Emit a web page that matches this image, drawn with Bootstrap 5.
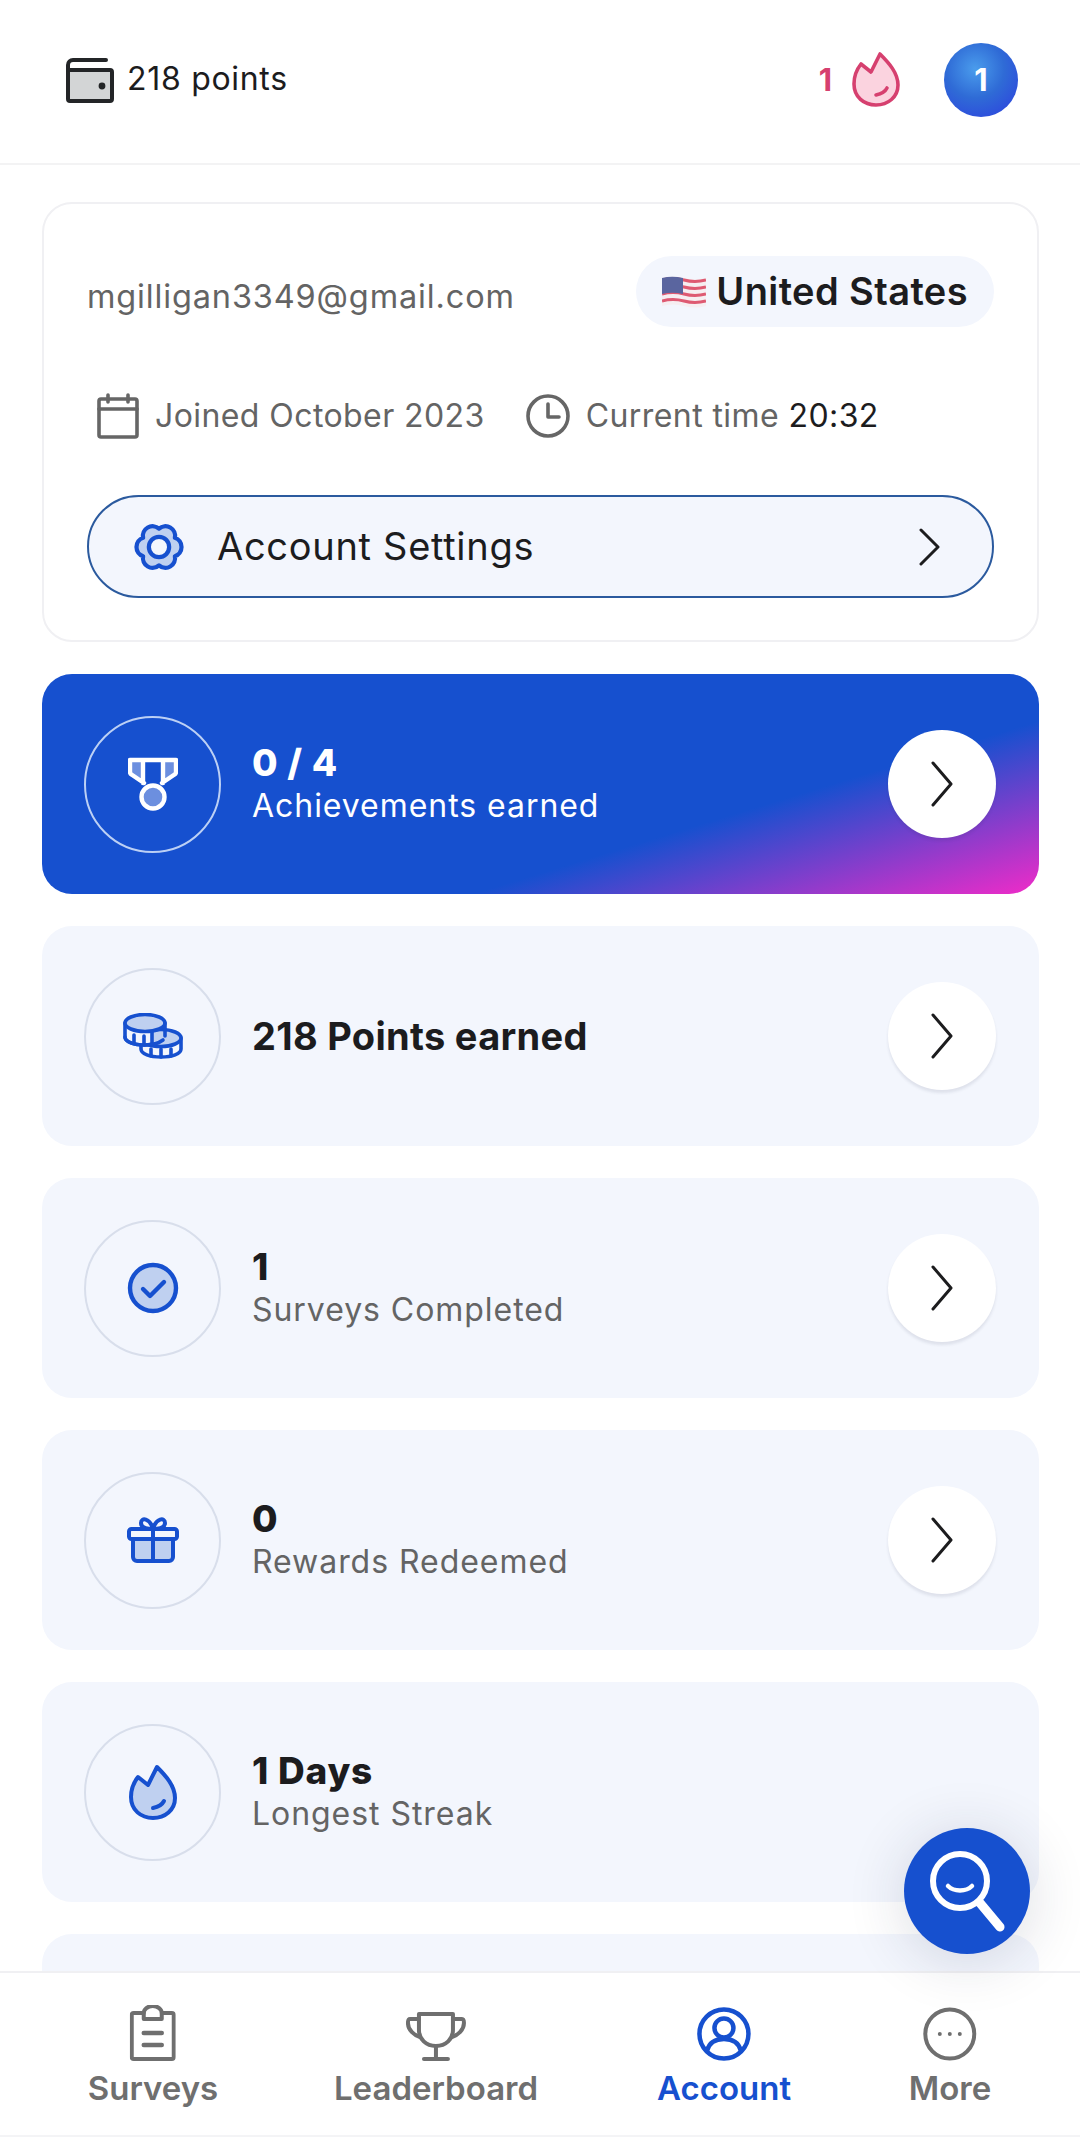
<!DOCTYPE html>
<html lang="en">
<head>
<meta charset="utf-8">
<title>Account</title>
<link rel="stylesheet" href="https://cdn.jsdelivr.net/npm/bootstrap@5.3.0/dist/css/bootstrap.min.css">
<style>
  :root { --brand: #1650cf; --tint: #f3f6fd; --ink: #1c1c1e; --muted: #646464; --icon-fill: #bfd0f0; }
  html, body { margin: 0; height: 2137px; overflow: hidden; background: #fff; }
  body { font-family: "Inter", "Liberation Sans", sans-serif; color: var(--ink); }
  .app-shell { height: 2137px; position: relative; overflow: hidden; }
  .top-strip { height: 165px; padding: 0 62px 3px 64px; border-bottom: 2px solid #f3f3f4; }
  .points-text { font-size: 32px; font-weight: 400; letter-spacing: .7px; margin-left: 13px; margin-top: -2px; }
  .streak-num { font-size: 31px; font-weight: 700; color: #d6406f; margin-right: 20px; }
  .flame-mark { margin-top: -3px; }
  .level-orb { width: 74px; height: 74px; margin-left: 44px; color: #fff; font-size: 31px; font-weight: 700;
    background: radial-gradient(circle at 42% 35%, #4a9cec 0%, #2f6bd6 45%, #2d3ce0 100%); }
  .content-area { flex: 1 1 auto; overflow: hidden; padding: 37px 41px 0 42px; gap: 32px; }
  .profile-box { height: 440px; flex: 0 0 auto; border: 2px solid #f0f0f3; border-radius: 30px; padding: 52px 43px 0 43px; }
  .email-text { font-size: 32.500px; color: var(--muted); letter-spacing: .85px; margin-top: 11px; }
  .country-pill { height: 71px; padding: 0 26px; background: var(--tint); gap: 10px; font-size: 38px; font-weight: 600; letter-spacing: .4px; }
  .meta-line { margin-top: 65px; height: 48px; font-size: 32px; color: var(--muted); letter-spacing: .42px; padding-left: 10px; }
  .meta-line b { font-weight: 400; color: var(--ink); }
  .clock-mark { margin-left: 41px; }
  .settings-btn { height: 103px; margin-top: 55px; padding: 0 52px 0 42px; background: var(--tint); border: 2px solid #2b5a9e; font-size: 38px; font-weight: 400; color: var(--ink); letter-spacing: .7px; }
  .settings-btn span { margin-left: 30px; }
  .stat-tile { height: 220px; flex: 0 0 auto; background: var(--tint); border-radius: 30px; padding: 0 43px 0 42px; }
  .stat-tile.tile-hero { color: #fff; background: linear-gradient(163deg, var(--brand) 67%, #f02bc8 100%); }
  .tile-hero .tile-sub { color: #fff; }
  .tile-hero .icon-ring { border-color: #bcd0f5; }
  .icon-ring { width: 137px; height: 137px; flex: 0 0 auto; border: 2px solid #d8deeb; }
  .tile-copy { margin-left: 31px; }
  .tile-num { font-size: 37px; font-weight: 800; line-height: 43px; letter-spacing: .8px; }
  .tile-sub { font-size: 32px; line-height: 44px; color: var(--muted); letter-spacing: .95px; }
  .tile-solo { font-size: 38px; font-weight: 700; letter-spacing: .3px; }
  .go-circle { width: 108px; height: 108px; flex: 0 0 auto; background: #fff; box-shadow: 0 3px 3px rgba(40, 50, 80, .1); }
  .dock { height: 166px; flex: 0 0 auto; background: #fff; border-top: 2px solid #f0f0f3; border-bottom: 2px solid #f4f4f6; color: #6f6f6f; position: relative; }
  .dock-item { position: absolute; top: 32px; display: flex; flex-direction: column; align-items: center; font-size: 33px; font-weight: 600; transform: translateX(-50%); line-height: 40px; }
  .dock-icon { height: 56px; display: flex; align-items: flex-end; margin-bottom: 7px; }
  .dock-item.is-active { color: var(--brand); }
  .dock-surveys { left: 153px; }
  .dock-board { left: 436px; }
  .dock-account { left: 724px; }
  .dock-more { left: 950px; }
  .search-fab { position: absolute; left: 904px; top: 1828px; width: 126px; height: 126px; background: var(--brand); z-index: 5; box-shadow: 0 6px 60px rgba(30, 40, 70, .16); }
</style>
</head>
<body>
<div class="app-shell d-flex flex-column">

  <header class="top-strip d-flex align-items-center flex-shrink-0">
    <svg width="50" height="46" viewBox="0 0 50 46" fill="none" stroke="#232527" stroke-width="4" stroke-linejoin="round" stroke-linecap="round">
      <path d="M4 13h42a2 2 0 0 1 2 2v27a2 2 0 0 1-2 2H6a2 2 0 0 1-2-2z" fill="#d3d5d6"/>
      <path d="M4 13V8a5 5 0 0 1 5-5h33"/>
      <circle cx="38" cy="29" r="1.400" fill="#232527"/>
    </svg>
    <span class="points-text">218 points</span>
    <span class="streak-num ms-auto">1</span>
    <svg class="flame-mark" width="48" height="56" viewBox="0 0 48 56" fill="#fbd3df" stroke="#d6406f" stroke-width="3.600" stroke-linejoin="round" stroke-linecap="round">
      <path d="M28 3c9 9 18 19 18 31 0 12-10 20-22 20S2 46 2 33c0-8 3-15 7-20l10 8z"/>
      <path d="M24 44c5-1 9-3 11-7" fill="none"/>
    </svg>
    <div class="level-orb rounded-circle d-flex align-items-center justify-content-center">1</div>
  </header>

  <main class="content-area d-flex flex-column">
    <section class="profile-box bg-white">
      <div class="d-flex justify-content-between align-items-center">
        <span class="email-text">mgilligan3349@gmail.com</span>
        <span class="country-pill rounded-pill d-inline-flex align-items-center">
          <svg width="44" height="34" viewBox="0 0 44 34">
            <path d="M0 3Q11 0 22 3T44 3V31Q33 34 22 31T0 31z" fill="#f6eef1"/>
            <g fill="none" stroke="#de5a72" stroke-width="3">
              <path d="M0 5Q11 2 22 5T44 5"/>
              <path d="M0 12Q11 9 22 12T44 12"/>
              <path d="M0 19Q11 16 22 19T44 19"/>
              <path d="M0 26Q11 23 22 26T44 26"/>
            </g>
            <path d="M0 3Q10 .5 21 3V19Q10 16.500 0 19z" fill="#5a659f"/>
          </svg>
          United States
        </span>
      </div>

      <div class="meta-line d-flex align-items-center">
        <svg width="42" height="46" viewBox="0 0 42 46" fill="none" stroke="#666" stroke-width="3.600" stroke-linejoin="round" stroke-linecap="round">
          <rect x="2" y="6" width="38" height="38" rx="2"/>
          <path d="M2 16h38M11 2v7M31 2v7"/>
        </svg>
        <span class="ms-3">Joined October 2023</span>
        <svg class="clock-mark" width="44" height="46" viewBox="0 0 44 46" fill="none" stroke="#666" stroke-width="3.600" stroke-linecap="round" stroke-linejoin="round">
          <circle cx="22" cy="23" r="20"/>
          <path d="M22 11v13h11"/>
        </svg>
        <span class="ms-3">Current time <b>20:32</b></span>
      </div>

      <a class="settings-btn rounded-pill d-flex align-items-center text-decoration-none" href="#">
        <svg width="56" height="56" viewBox="-4 -4 58 58" fill="#bfd0f0" stroke="#1650cf" stroke-width="4.400" stroke-linejoin="round">
          <path d="M25 6A10 10 0 0 1 41.450 15.500 10 10 0 0 1 41.450 34.500 10 10 0 0 1 25 44 10 10 0 0 1 8.550 34.500 10 10 0 0 1 8.550 15.500 10 10 0 0 1 25 6z"/>
          <circle cx="25" cy="25" r="10.500" fill="#f3f6fd"/>
        </svg>
        <span>Account Settings</span>
        <svg class="ms-auto" width="22" height="38" viewBox="0 0 22 38" fill="none" stroke="#1c1c1e" stroke-width="3" stroke-linecap="round" stroke-linejoin="round">
          <path d="M3 2l17 17L3 36"/>
        </svg>
      </a>
    </section>

    <article class="stat-tile tile-hero d-flex align-items-center">
      <div class="icon-ring rounded-circle d-flex align-items-center justify-content-center">
        <svg width="50" height="54" viewBox="0 0 50 54" fill="none" stroke="#fff" stroke-width="4.400" stroke-linejoin="round" stroke-linecap="round">
          <path d="M3 17V5h11v17zM36 22V5h11v12z" fill="#6c8fdf" stroke="none"/>
          <path d="M15 3v23M35 3v23M2 3h46v12a3 3 0 0 1-1.500 2.500L34 26M16 26L3.500 17.500A3 3 0 0 1 2 15V3"/>
          <circle cx="25" cy="40" r="11.500" fill="#6c8fdf"/>
        </svg>
      </div>
      <div class="tile-copy">
        <div class="tile-num">0 / 4</div>
        <div class="tile-sub">Achievements earned</div>
      </div>
      <div class="go-circle rounded-circle d-flex align-items-center justify-content-center ms-auto">
        <svg width="24" height="46" viewBox="0 0 24 46" fill="none" stroke="#1c1c1e" stroke-width="3" stroke-linecap="round" stroke-linejoin="round"><path d="M3 2l18 21L3 44"/></svg>
      </div>
    </article>

    <article class="stat-tile d-flex align-items-center">
      <div class="icon-ring rounded-circle d-flex align-items-center justify-content-center">
        <svg width="62" height="46" viewBox="0 0 62 46" fill="none" stroke="#1650cf" stroke-width="3.600" stroke-linejoin="round" stroke-linecap="round">
          <path d="M19 25v11c0 5 9 8 20 8s20-3 20-8V25z" fill="#f3f6fd"/>
          <ellipse cx="39" cy="25" rx="20" ry="8.500" fill="#bfd0f0"/>
          <path d="M29 36v7M39 36v8M49 36v7"/>
          <path d="M3 10v14c0 5 9 8 20 8 3 0 5 0 7-1V10z" fill="#f3f6fd"/>
          <path d="M12 22v8M22 23v9"/>
          <path d="M3 24c0 5 9 8 20 8 8 0 14-2 18-5"/>
          <ellipse cx="23" cy="10" rx="20" ry="8.500" fill="#bfd0f0"/>
          <path d="M43 10v13"/>
        </svg>
      </div>
      <div class="tile-copy tile-solo">218 Points earned</div>
      <div class="go-circle rounded-circle d-flex align-items-center justify-content-center ms-auto">
        <svg width="24" height="46" viewBox="0 0 24 46" fill="none" stroke="#1c1c1e" stroke-width="3" stroke-linecap="round" stroke-linejoin="round"><path d="M3 2l18 21L3 44"/></svg>
      </div>
    </article>

    <article class="stat-tile d-flex align-items-center">
      <div class="icon-ring rounded-circle d-flex align-items-center justify-content-center">
        <svg width="52" height="52" viewBox="0 0 52 52" fill="#bfd0f0" stroke="#1650cf" stroke-width="4.400" stroke-linecap="round" stroke-linejoin="round">
          <circle cx="26" cy="26" r="23"/>
          <path d="M16 27l7 7 14-14" fill="none"/>
        </svg>
      </div>
      <div class="tile-copy">
        <div class="tile-num">1</div>
        <div class="tile-sub">Surveys Completed</div>
      </div>
      <div class="go-circle rounded-circle d-flex align-items-center justify-content-center ms-auto">
        <svg width="24" height="46" viewBox="0 0 24 46" fill="none" stroke="#1c1c1e" stroke-width="3" stroke-linecap="round" stroke-linejoin="round"><path d="M3 2l18 21L3 44"/></svg>
      </div>
    </article>

    <article class="stat-tile d-flex align-items-center">
      <div class="icon-ring rounded-circle d-flex align-items-center justify-content-center">
        <svg width="52" height="46" viewBox="0 0 52 46" fill="none" stroke="#1650cf" stroke-width="4" stroke-linecap="round" stroke-linejoin="round">
          <path d="M6 22h40v18a4 4 0 0 1-4 4H10a4 4 0 0 1-4-4z" fill="#bfd0f0"/>
          <rect x="2" y="12" width="48" height="10" rx="2.500" fill="#f3f6fd"/>
          <path d="M26 12v32M26 12c-6 0-12-1-12-6 0-6 9-5 12 6zM26 12c6 0 12-1 12-6 0-6-9-5-12 6z"/>
        </svg>
      </div>
      <div class="tile-copy">
        <div class="tile-num">0</div>
        <div class="tile-sub">Rewards Redeemed</div>
      </div>
      <div class="go-circle rounded-circle d-flex align-items-center justify-content-center ms-auto">
        <svg width="24" height="46" viewBox="0 0 24 46" fill="none" stroke="#1c1c1e" stroke-width="3" stroke-linecap="round" stroke-linejoin="round"><path d="M3 2l18 21L3 44"/></svg>
      </div>
    </article>

    <article class="stat-tile d-flex align-items-center">
      <div class="icon-ring rounded-circle d-flex align-items-center justify-content-center">
        <svg width="48" height="56" viewBox="0 0 48 56" fill="#bfd0f0" stroke="#1650cf" stroke-width="4" stroke-linejoin="round" stroke-linecap="round">
          <path d="M28 3c9 9 18 19 18 31 0 12-10 20-22 20S2 46 2 33c0-8 3-15 7-20l10 8z"/>
          <path d="M24 44c5-1 9-3 11-7" fill="none"/>
        </svg>
      </div>
      <div class="tile-copy">
        <div class="tile-num">1 Days</div>
        <div class="tile-sub">Longest Streak</div>
      </div>
    </article>

    <article class="stat-tile"></article>
  </main>

  <a class="search-fab rounded-circle d-flex align-items-center justify-content-center" href="#" aria-label="Search">
    <svg width="78" height="84" viewBox="0 0 78 84" fill="none" stroke="#fff" stroke-linecap="round">
      <circle cx="32" cy="32" r="27" stroke-width="6"/>
      <path d="M20 37c6 6 18 6 24 0" stroke-width="4.500"/>
      <path d="M52 54l20 24" stroke-width="9"/>
    </svg>
  </a>

  <nav class="dock">
    <div class="dock-item dock-surveys">
      <div class="dock-icon">
        <svg width="46" height="56" viewBox="0 0 46 56" fill="none" stroke="#6f6f6f" stroke-width="4" stroke-linejoin="round" stroke-linecap="round">
          <path d="M14 8H4a2 2 0 0 0-2 2v42a2 2 0 0 0 2 2h38a2 2 0 0 0 2-2V10a2 2 0 0 0-2-2H32"/>
          <path d="M14 14V8a9 7 0 0 1 18 0v6z"/>
          <path d="M14 28h18M14 40h18" stroke-width="4.500"/>
        </svg>
      </div>
      Surveys
    </div>
    <div class="dock-item dock-board">
      <div class="dock-icon">
        <svg width="60" height="50" viewBox="0 0 60 50" fill="none" stroke="#6f6f6f" stroke-width="4" stroke-linejoin="round" stroke-linecap="round">
          <path d="M13 3h34v16c0 9-7 16-17 16s-17-7-17-16z"/>
          <path d="M13 8H4c-2 0-2 2-2 4 0 7 6 12 12 14M47 8h9c2 0 2 2 2 4 0 7-6 12-12 14"/>
          <path d="M30 35v13M18 48h24"/>
        </svg>
      </div>
      Leaderboard
    </div>
    <div class="dock-item dock-account is-active">
      <div class="dock-icon">
        <svg width="54" height="54" viewBox="0 0 54 54" fill="none" stroke="#1650cf" stroke-width="4.500" stroke-linecap="round" stroke-linejoin="round">
          <circle cx="27" cy="27" r="24.500"/>
          <circle cx="27" cy="21" r="9.500"/>
          <path d="M10 44c2-8 8-12 17-12s15 4 17 12"/>
        </svg>
      </div>
      Account
    </div>
    <div class="dock-item dock-more">
      <div class="dock-icon">
        <svg width="54" height="54" viewBox="0 0 54 54" fill="#6f6f6f">
          <circle cx="27" cy="27" r="24.500" fill="none" stroke="#6f6f6f" stroke-width="4"/>
          <circle cx="17" cy="27" r="2"/><circle cx="27" cy="27" r="2"/><circle cx="37" cy="27" r="2"/>
        </svg>
      </div>
      More
    </div>
  </nav>
</div>
<script src="https://cdn.jsdelivr.net/npm/bootstrap@5.3.0/dist/js/bootstrap.bundle.min.js"></script>
</body>
</html>
